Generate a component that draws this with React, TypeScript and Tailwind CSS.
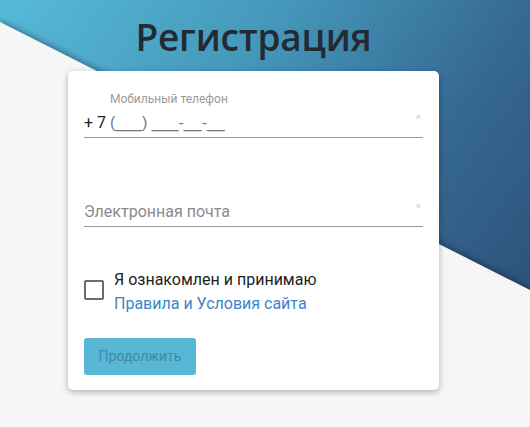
export default function App() {
  return (
    <div className="relative h-[427px] w-[530px] overflow-hidden bg-[linear-gradient(125deg,#57bad9_0%,#4597b9_35%,#356892_65%,#2a4870_100%)] font-['Roboto',sans-serif]">
      {/* light diagonal panel */}
      <div className="absolute inset-0 drop-shadow-[0_-2px_3px_rgba(0,0,0,0.35)]">
        <div className="h-full w-full bg-[#f6f6f6] [clip-path:polygon(0_22px,100%_290px,100%_100%,0_100%)]" />
      </div>

      <div className="relative flex flex-col">
        <h1 className="ml-[68px] w-[371px] pt-[12px] text-center font-['Open_Sans',sans-serif] text-[37px] font-semibold leading-[49px] tracking-[-0.2px] text-[#222a33]">
          Регистрация
        </h1>

        <div className="ml-[68px] mt-[10px] flex h-[319px] w-[371px] flex-col rounded-[5px] bg-white px-4 shadow-[0_2px_6px_rgba(0,0,0,0.3)]">
          <div className="relative mt-[21px]">
            <div className="pl-[26px] text-[12px] leading-[14px] text-[#9a9a9a]">Мобильный телефон</div>
            <div className="flex items-center justify-between border-b border-[#9a9a9a] pb-[3px] pt-[6px]">
              <span className="text-[16px] leading-[22px] text-[#222]">
                + 7 <span className="font-['Liberation_Sans',sans-serif] text-[#6f7c88]">(___) ___-__-__</span>
              </span>
              <span className="mr-[2px] -mt-[8px] text-[13px] text-[#d8d8d8]">*</span>
            </div>
          </div>

          <div className="mt-[62px] flex items-center justify-between border-b border-[#9a9a9a] pb-[3px] pt-[1px]">
            <span className="text-[16px] leading-[22px] text-[#8a8a8a]">Электронная почта</span>
            <span className="mr-[2px] -mt-[8px] text-[13px] text-[#d8d8d8]">*</span>
          </div>

          <div className="mt-[39px] flex items-center gap-[10px]">
            <div className="h-[20px] w-[20px] shrink-0 rounded-[2px] border-2 border-[#6b6b6b]" />
            <div className="relative top-[2px] text-[16px] leading-[24px]">
              <div className="text-[#222]">Я ознакомлен и принимаю</div>
              <div className="text-[#3a86c8]">Правила и Условия сайта</div>
            </div>
          </div>

          <button
            type="button"
            disabled
            className="mt-[24px] h-[37px] w-[112px] rounded-[3px] bg-[#58b7d4] text-[14px] text-[#3f8aa6]"
          >
            Продолжить
          </button>
        </div>
      </div>
    </div>
  );
}
